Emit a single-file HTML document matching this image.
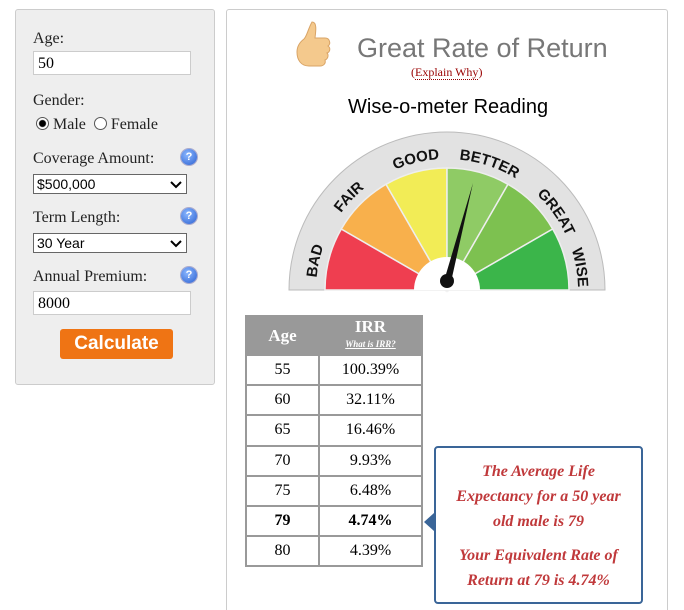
<!DOCTYPE html>
<html style="height:610px;overflow:hidden"><head><style>
body{margin:0;width:684px;height:610px;background:#fff;font-family:"Liberation Serif",serif;position:relative;overflow:hidden}
.lp{position:absolute;left:15px;top:9px;width:198px;height:374px;background:#eee;border:1px solid #ccc;border-radius:3px}
.rp{position:absolute;left:226px;top:9px;width:440px;height:600px;border:1px solid #ccc;border-bottom:none;border-radius:3px 3px 0 0}
.lb{position:absolute;left:17px;font-size:16px;color:#222}
.in{position:absolute;left:17px;height:24px;background:#fff;border:1px solid #ccc;font-size:16px;line-height:24px;padding-left:4px;box-sizing:border-box;width:158px}
.sel{position:absolute;left:17px;width:154px;height:20px;background:#fff;border:1px solid #666;font-family:"Liberation Sans",sans-serif;font-size:14px;line-height:18px;padding-left:3px;box-sizing:border-box}
.sel svg{position:absolute;right:4px;top:6px}
.q{position:absolute;left:165px;width:16px;height:16px;border-radius:50%;background:radial-gradient(circle at 40% 35%,#8cb8ff,#2a5fd0);color:#fff;font:bold 11px "Liberation Sans",sans-serif;text-align:center;line-height:16px;box-shadow:0 0 0 1px #aac}
.btn{position:absolute;left:44px;top:319px;width:113px;height:30px;background:#ef7414;border-radius:3px;color:#fff;font:bold 19px "Liberation Sans",sans-serif;text-align:center;line-height:30px}
table{position:absolute;left:245px;top:315px;border-collapse:collapse;font-size:16px}
td,th{border:2px solid #999;text-align:center;height:28.2px;padding:0}
th{background:#999;color:#fff;height:37px}
.cb{position:absolute;left:434px;top:446px;width:205px;height:154px;border:2px solid #3a6598;border-radius:4px;color:#c0393b;font-style:italic;font-weight:bold;font-size:16px;text-align:center;line-height:25px;white-space:nowrap}
</style></head><body>
<div class="lp">
<div class="lb" style="top:20px">Age:</div>
<div class="in" style="top:41px">50</div>
<div class="lb" style="top:82px">Gender:</div>
<div class="lb" style="top:106px;left:20px"><span style="display:inline-block;width:11px;height:11px;border:1px solid #555;border-radius:50%;background:radial-gradient(#000 3px,#fff 4px);vertical-align:-1px"></span> Male &nbsp;<span style="display:inline-block;width:11px;height:11px;border:1px solid #555;border-radius:50%;background:#fff;vertical-align:-1px"></span> Female</div>
<div class="lb" style="top:140px">Coverage Amount:</div><div class="q" style="top:139px">?</div>
<div class="sel" style="top:164px">$500,000<svg width="12" height="8"><path d="M1 1l5 5 5-5" stroke="#000" stroke-width="2" fill="none"/></svg></div>
<div class="lb" style="top:199px">Term Length:</div><div class="q" style="top:198px">?</div>
<div class="sel" style="top:223px">30 Year<svg width="12" height="8"><path d="M1 1l5 5 5-5" stroke="#000" stroke-width="2" fill="none"/></svg></div>
<div class="lb" style="top:258px">Annual Premium:</div><div class="q" style="top:257px">?</div>
<div class="in" style="top:281px">8000</div>
<div class="btn">Calculate</div>
</div>
<div class="rp"></div>
<svg style="position:absolute;left:294px;top:20px" width="40" height="62"><path d="M18 2c5 0 4 8 3 16h10c5 0 6 6 3 8 3 2 2 6-1 7 2 2 1 6-2 7 1 3-1 6-5 6H15c-8 0-12-6-12-14 0-6 3-10 7-13 3-3 4-10 8-17z" fill="#f4c98d" stroke="#d9a466"/></svg>
<div style="position:absolute;left:357px;top:33px;font:27px 'Liberation Sans',sans-serif;color:#777">Great Rate of Return</div>
<div style="position:absolute;left:411px;top:65px;font-size:12px;color:#900">(<span style="border-bottom:1px dotted #900">Explain Why</span>)</div>
<div style="position:absolute;left:348px;top:96px;font:20px 'Liberation Sans',sans-serif;color:#000">Wise-o-meter Reading</div>
<svg style="position:absolute;left:0;top:0" width="684" height="310">
<defs><path id="tp" d="M316 290 A131 131 0 0 1 578 290"/></defs>
<path d="M289 290 A158 158 0 0 1 605 290 Z" fill="#e2e2e2" stroke="#bbb"/>
<g stroke="#eee" stroke-width="1.5">
<path d="M447 290 L325 290 A122 122 0 0 1 341.3 229 Z" fill="#ef3e50"/>
<path d="M447 290 L341.3 229 A122 122 0 0 1 386 184.3 Z" fill="#f8b04c"/>
<path d="M447 290 L386 184.3 A122 122 0 0 1 447 168 Z" fill="#f2ec56"/>
<path d="M447 290 L447 168 A122 122 0 0 1 508 184.3 Z" fill="#8fcb65"/>
<path d="M447 290 L508 184.3 A122 122 0 0 1 552.7 229 Z" fill="#7dc150"/>
<path d="M447 290 L552.7 229 A122 122 0 0 1 569 290 Z" fill="#3bb54a"/>
</g>
<path d="M414 290 A33 33 0 0 1 480 290 Z" fill="#fff"/>
<g font-family="Liberation Sans" font-weight="bold" font-size="15" fill="#111">
<text><textPath href="#tp" startOffset="3%">BAD</textPath></text>
<text><textPath href="#tp" startOffset="20%">FAIR</textPath></text>
<text><textPath href="#tp" startOffset="37%">GOOD</textPath></text>
<text><textPath href="#tp" startOffset="53%">BETTER</textPath></text>
<text><textPath href="#tp" startOffset="74%">GREAT</textPath></text>
<text><textPath href="#tp" startOffset="90%">WISE</textPath></text>
</g>
<path d="M444 281 L473 183 L451 282 Z" fill="#111"/>
<circle cx="447" cy="281" r="7" fill="#111"/>
</svg>
<table>
<tr><th style="width:71px;font-size:17px">Age</th><th style="width:101px;font-size:17px;line-height:15px">IRR<br><span style="font-size:9px;font-style:italic;text-decoration:underline">What is IRR?</span></th></tr>
<tr><td>55</td><td>100.39%</td></tr>
<tr><td>60</td><td>32.11%</td></tr>
<tr><td>65</td><td>16.46%</td></tr>
<tr><td>70</td><td>9.93%</td></tr>
<tr><td>75</td><td>6.48%</td></tr>
<tr><td><b>79</b></td><td><b>4.74%</b></td></tr>
<tr><td>80</td><td>4.39%</td></tr>
</table>
<div style="position:absolute;left:424px;top:513px;width:0;height:0;border:9px solid transparent;border-right:10px solid #3a6598;border-left:0"></div>
<div class="cb"><div style="margin-top:11px">The Average Life<br>Expectancy for a 50 year<br>old male is 79</div><div style="margin-top:9px">Your Equivalent Rate of<br>Return at 79 is 4.74%</div></div>
</body></html>
